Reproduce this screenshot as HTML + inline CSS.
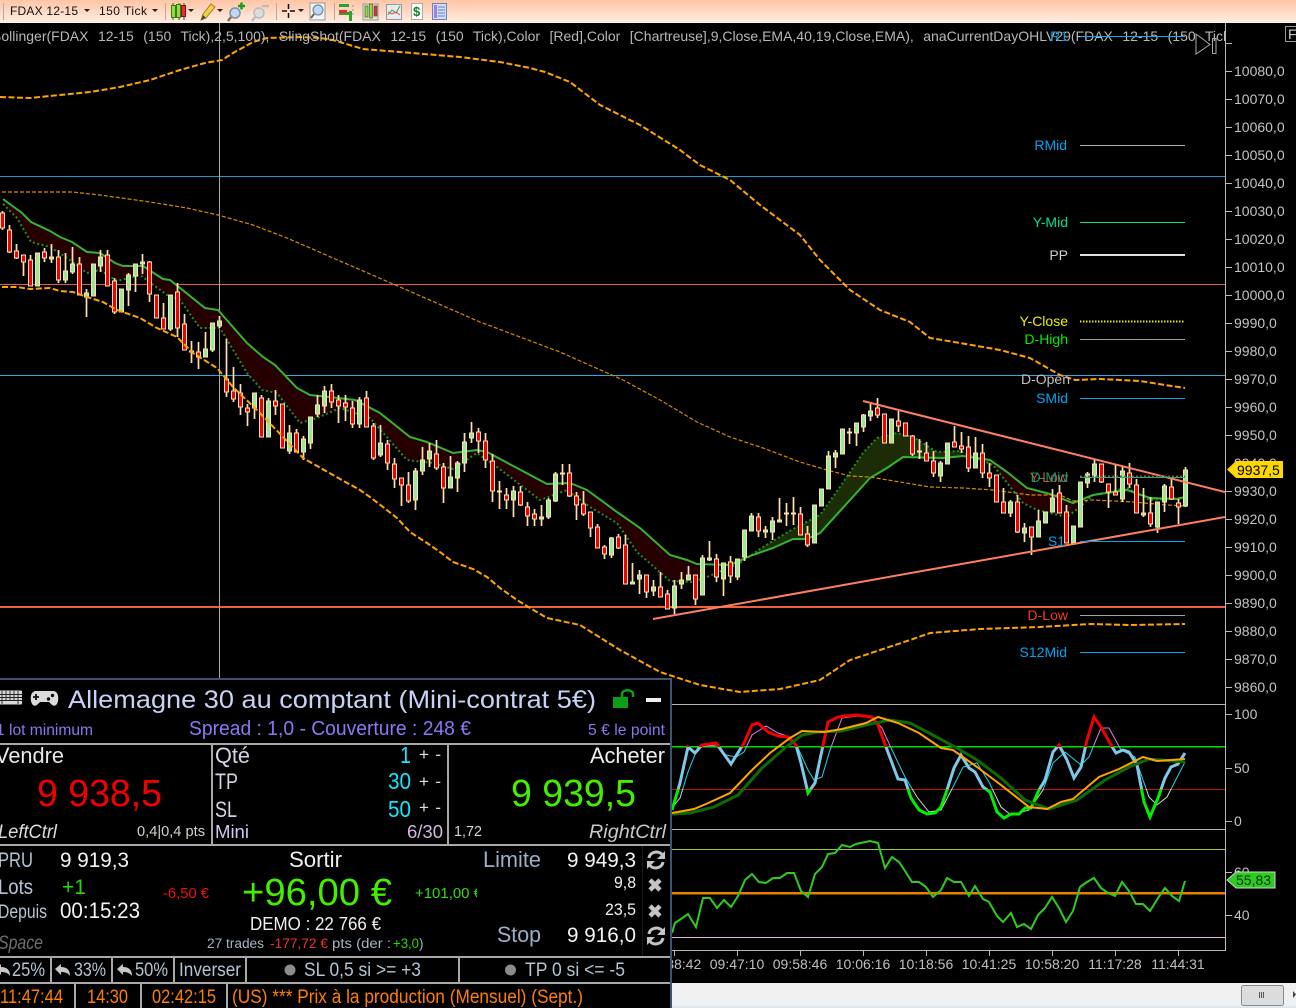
<!DOCTYPE html>
<html><head><meta charset="utf-8"><title>FDAX</title>
<style>
html,body{margin:0;padding:0;background:#000;width:1296px;height:1008px;overflow:hidden}
svg{position:absolute;left:0;top:0;display:block}
text{font-family:"Liberation Sans",Arial,sans-serif;white-space:pre}
.a{font-size:14px;fill:#c4c4c4}
.l{font-size:14px;text-anchor:end}
.t{font-size:14px;fill:#c0c0c0;text-anchor:middle}
</style></head><body>
<svg width="1296" height="1008" viewBox="0 0 1296 1008">
<defs>
<linearGradient id="tb" x1="0" y1="0" x2="0" y2="1"><stop offset="0" stop-color="#ffc5a5"/><stop offset="1" stop-color="#fdeee4"/></linearGradient>
<clipPath id="ch"><rect x="0" y="23" width="1225" height="681"/></clipPath>
<clipPath id="hi"><rect x="672" y="705" width="553" height="42"/></clipPath>
<clipPath id="mid"><rect x="672" y="747" width="553" height="42"/></clipPath>
<clipPath id="lo"><rect x="672" y="789" width="553" height="40"/></clipPath>
</defs>
<rect width="1296" height="1008" fill="#000"/>

<!-- toolbar -->
<rect width="1296" height="23" fill="url(#tb)"/>
<g fill="#b8a8a0"><rect x="3" y="3" width="1" height="17"/><rect x="165" y="3" width="1" height="17"/><rect x="276" y="3" width="1" height="17"/><rect x="334" y="3" width="1" height="17"/></g>
<text x="10" y="15" font-size="12" fill="#111" textLength="68" lengthAdjust="spacing">FDAX 12-15</text>
<path d="M84 9h6l-3 3zM152 9h6l-3 3zM188 9h6l-3 3zM217 9h6l-3 3zM298 9h6l-3 3z" fill="#222"/>
<text x="99" y="15" font-size="12" fill="#111" textLength="48" lengthAdjust="spacing">150 Tick</text>
<path d="M173 3v17M179 3v17M184 3v17" stroke="#444" fill="none"/>
<rect x="171.500" y="5.500" width="4" height="12" fill="#8fe03a" stroke="#3a7a10"/><rect x="176.500" y="4.500" width="4" height="13" fill="#8fe03a" stroke="#3a7a10"/><rect x="181.500" y="5.500" width="4" height="11" fill="#e63030" stroke="#801010"/>
<path d="M201 20l2-6L211 4l4 3-9 11z" fill="#f3d040" stroke="#a08030"/><path d="M201 20l2-5 3 3z" fill="#444"/>
<circle cx="235" cy="13" r="5" fill="#bcd8f4" stroke="#8090a0" stroke-width="1.500"/><path d="M231 17l-3 4" stroke="#907050" stroke-width="2.500"/><path d="M238 6h7M241.500 2.500v7" stroke="#10a020" stroke-width="2.500"/>
<circle cx="259" cy="13" r="5" fill="#ddd" stroke="#bbb" stroke-width="1.500"/><path d="M255 17l-3 4" stroke="#bbb" stroke-width="2.500"/><path d="M262 6h7" stroke="#bbb" stroke-width="2.500"/>
<path d="M282 11h5M290 11h5M288.500 4v5M288.500 13v5" stroke="#111" stroke-width="1.500"/>
<rect x="310" y="3" width="15" height="17" fill="#f4f4f4" stroke="#999"/><circle cx="318" cy="10" r="5" fill="#bcd8f4" stroke="#6a7a8a"/><path d="M314 14l-3 4" stroke="#806040" stroke-width="2"/>
<path d="M339 4h10v3h-10zM339 12h10v3h-10z" fill="#30a030"/><rect x="339" y="10" width="8" height="3" fill="#e03030"/><rect x="349" y="11" width="3" height="10" fill="#30a030"/><path d="M352 6h2M352 10h2M352 14h2" stroke="#999"/>
<rect x="363" y="4" width="15" height="16" fill="#e6e0d0" stroke="#999"/><rect x="365" y="6" width="3" height="11" fill="#8fe03a" stroke="#444" stroke-width=".6"/><rect x="369.500" y="4" width="3" height="14" fill="#8fe03a" stroke="#444" stroke-width=".6"/><rect x="374" y="6" width="3" height="10" fill="#e63030" stroke="#444" stroke-width=".6"/>
<rect x="386.500" y="4.500" width="15" height="15" fill="#e8ecf0" stroke="#999"/><path d="M388 15l4-5 4 3 4-7" stroke="#40a040" fill="none"/><path d="M388 12l4 2 4-2 4 3" stroke="#e05050" fill="none"/>
<rect x="411.500" y="3.500" width="11" height="16" fill="#fff" stroke="#aaa"/><text x="413" y="16" font-size="13" font-weight="bold" fill="#108030">$</text>
<rect x="432.500" y="3.500" width="14" height="16" fill="#cfe0f8" stroke="#7080b0"/><rect x="434" y="5" width="3" height="13" fill="#a080e0"/><path d="M438 7h7M438 10h7M438 13h7M438 16h7" stroke="#6080c0"/>

<!-- chart horizontal lines -->
<g clip-path="url(#ch)">
<rect x="0" y="176" width="1225" height="1" fill="#1c9ad6"/>
<rect x="0" y="284" width="1225" height="1" fill="#e05a5a"/>
<rect x="0" y="375" width="1225" height="1" fill="#30a8e0"/>
<rect x="0" y="606" width="1225" height="2" fill="#f0603c"/>
<rect x="219" y="23" width="1" height="660" fill="#a8a8a8"/>

<!-- clouds -->
<polygon fill="#260000" points="3,199 22,213 31,222 50,231 60,237 72,242 87,252 100,253 115,263 123,266 143,266 163,279 170,280 205,308 218,310 247,343 263,357 275,365 297,388 310,395 330,397 355,400 380,413 410,437 427,442 453,453 477,450 487,452 517,468 547,484 570,483 587,490 617,512 640,528 670,555 687,560 697,564 707,577 693,582 670,581 637,552 617,523 590,507 567,490 540,500 497,467 477,453 453,469 433,463 407,460 370,418 340,408 317,418 300,423 277,393 262,390 247,373 220,328 200,328 180,300 167,295 140,275 117,281 100,270 87,273 70,260 50,247 31,242 17,218 3,204"/>
<polygon fill="#1b2c06" points="735,562 750,556 773,548 793,539 807,539 820,533 870,478 887,468 903,457 943,458 963,456 960,451 937,452 913,437 897,433 877,438 863,453 840,487 820,515 793,529 763,547 740,563"/>
<polygon fill="#260000" points="975,458 990,460 1007,472 1027,488 1050,494 1073,503 1080,507 1067,517 1037,510 1023,503 993,465"/>
<polygon fill="#1b2c06" points="1080,503 1093,495 1127,490 1150,498 1177,499 1150,500 1127,488 1093,495"/>

<!-- MA dotted/solid -->
<polyline fill="none" stroke="#1f8f1f" stroke-width="2" stroke-dasharray="2 2.500" points="3,204 17,218 31,242 50,247 70,260 87,273 100,270 117,281 140,275 167,295 180,300 200,328 220,328 247,373 262,390 277,393 300,423 317,418 340,408 370,418 407,460 433,463 453,469 477,453 497,467 540,500 567,490 590,507 617,523 637,552 670,581 693,582 707,577 740,563 763,547 793,529 820,515 840,487 863,453 877,438 897,433 913,437 937,452 960,451 993,465 1023,503 1037,510 1067,517 1080,507 1093,495 1127,488 1150,500 1180,498"/>
<polyline fill="none" stroke="#35b52d" stroke-width="2" points="3,199 22,213 31,222 50,231 60,237 72,242 87,252 100,253 115,263 123,266 143,266 163,279 170,280 205,308 218,310 247,343 263,357 275,365 297,388 310,395 330,397 355,400 380,413 410,437 427,442 453,453 477,450 487,452 517,468 547,484 570,483 587,490 617,512 640,528 670,555 687,560 697,564 730,565 750,556 773,548 793,539 807,539 820,533 870,478 887,468 903,457 943,458 963,456 990,460 1007,472 1027,488 1050,494 1073,503 1093,495 1127,490 1150,498 1177,499 1185,497"/>

<!-- mid MA -->
<polyline fill="none" stroke="#d98a00" stroke-width="1.200" stroke-dasharray="4 2" points="2,192 72,192 100,195 150,202 187,208 218,215 253,225 287,238 340,261 400,287 480,322 560,352 623,380 660,400 697,422 730,437 763,448 800,462 827,470 850,476 870,477 930,487 963,488 993,490 1030,495 1060,495 1073,501 1093,500 1133,502 1167,505 1185,506"/>

<!-- candles -->
<path fill="none" stroke="#ffdeb0" stroke-width="1.700" d="M2.500 211V230M9.500 225V253M16.500 244V259M23.500 255V276M30.500 255V286M37.500 253V286M44.500 248V262M51.500 244V263M58.500 250V283M65.500 253V283M72.500 247V274M79.500 257V295M86.500 289V317M93.500 264V296M100.500 250V272M107.500 250V286M114.500 278V314M121.500 289V312M128.500 273V306M135.500 264V292M142.500 254V274M149.500 261V302M156.500 295V318M163.500 303V329M170.500 295V331M177.500 283V337M184.500 314V350M191.500 341V363M198.500 342V369M205.500 332V357M212.500 323V352M219.500 316V328M226.500 339V397M233.500 367V402M240.500 384V415M247.500 404V426M254.500 393V419M261.500 395V437M268.500 398V437M275.500 390V415M282.500 404V448M289.500 425V454M296.500 429V452M303.500 436V460M310.500 417V449M317.500 395V417M324.500 386V413M331.500 384V408M338.500 395V423M345.500 395V421M352.500 401V428M359.500 397V428M366.500 391V427M373.500 423V460M380.500 425V457M387.500 440V470M394.500 458V488M401.500 478V506M408.500 472V503M415.500 468V510M422.500 447V475M429.500 443V467M436.500 440V470M443.500 463V503M450.500 456V488M457.500 461V492M464.500 433V472M471.500 422V443M478.500 428V453M485.500 433V468M492.500 454V502M499.500 481V509M506.500 488V509M513.500 486V517M520.500 486V506M527.500 502V526M534.500 509V526M541.500 505V526M548.500 498V519M555.500 472V502M562.500 464V485M569.500 464V497M576.500 492V520M583.500 491V516M590.500 512V537M597.500 524V548M604.500 545V559M611.500 537V558M618.500 534V549M625.500 535V584M632.500 563V584M639.500 570V594M646.500 575V598M653.500 580V596M660.500 572V597M667.500 590V609M674.500 580V614M681.500 572V589M688.500 566V580M695.500 575V605M702.500 555V595M709.500 541V561M716.500 554V582M723.500 563V596M730.500 556V583M737.500 559V580M744.500 530V561M751.500 513V531M758.500 513V537M765.500 526V538M772.500 517V540M779.500 498V522M786.500 503V526M793.500 497V525M800.500 507V535M807.500 526V547M814.500 505V543M821.500 489V506M828.500 451V489M835.500 450V468M842.500 429V454M849.500 428V444M856.500 423V446M863.500 414V432M870.500 404V421M877.500 398V418M884.500 414V443M891.500 419V443M898.500 411V432M905.500 423V436M912.500 435V456M919.500 439V459M926.500 442V461M933.500 451V477M940.500 461V482M947.500 443V464M954.500 426V447M961.500 432V453M968.500 436V472M975.500 437V468M982.500 444V478M989.500 463V487M996.500 475V502M1003.500 488V513M1010.500 500V517M1017.500 495V533M1024.500 523V542M1031.500 527V555M1038.500 510V537M1045.500 512V523M1052.500 489V512M1059.500 485V513M1066.500 505V543M1073.500 526V543M1080.500 482V527M1087.500 472V488M1094.500 459V482M1101.500 464V483M1108.500 484V508M1115.500 465V495M1122.500 467V502M1129.500 463V488M1136.500 479V513M1143.500 488V517M1150.500 497V527M1157.500 502V533M1164.500 484V512M1171.500 478V500M1178.500 499V524M1185.500 467V507"/>
<path fill="#f00000" stroke="#ffdeb0" d="M.5 213h4V228h-4zM7.500 230h4V252h-4zM14.500 251h4V258h-4zM21.500 255h4V262h-4zM28.500 260h4V286h-4zM42.500 252h4V258h-4zM56.500 257h4V280h-4zM77.500 264h4V295h-4zM105.500 255h4V286h-4zM112.500 281h4V312h-4zM147.500 262h4V294h-4zM154.500 295h4V318h-4zM161.500 318h4V329h-4zM175.500 292h4V328h-4zM182.500 324h4V350h-4zM196.500 352h4V357h-4zM224.500 379h4V392h-4zM231.500 391h4V399h-4zM238.500 393h4V407h-4zM245.500 408h4V412h-4zM259.500 398h4V437h-4zM273.500 401h4V406h-4zM280.500 404h4V448h-4zM294.500 433h4V452h-4zM329.500 391h4V402h-4zM336.500 400h4V406h-4zM343.500 403h4V407h-4zM350.500 408h4V424h-4zM364.500 398h4V427h-4zM371.500 426h4V458h-4zM385.500 444h4V463h-4zM392.500 464h4V479h-4zM399.500 478h4V485h-4zM406.500 485h4V501h-4zM434.500 454h4V468h-4zM441.500 467h4V488h-4zM476.500 432h4V441h-4zM483.500 441h4V460h-4zM490.500 461h4V491h-4zM504.500 495h4V500h-4zM518.500 492h4V505h-4zM525.500 507h4V516h-4zM532.500 514h4V519h-4zM560.500 473h4V474h-4zM567.500 473h4V496h-4zM574.500 496h4V505h-4zM581.500 504h4V514h-4zM588.500 512h4V528h-4zM595.500 527h4V548h-4zM602.500 547h4V554h-4zM616.500 537h4V548h-4zM623.500 545h4V584h-4zM644.500 575h4V592h-4zM658.500 587h4V597h-4zM665.500 594h4V609h-4zM693.500 575h4V599h-4zM714.500 559h4V577h-4zM728.500 562h4V576h-4zM756.500 517h4V531h-4zM798.500 514h4V535h-4zM805.500 534h4V545h-4zM875.500 408h4V415h-4zM882.500 414h4V443h-4zM896.500 421h4V426h-4zM903.500 423h4V436h-4zM910.500 436h4V454h-4zM924.500 453h4V461h-4zM931.500 461h4V473h-4zM952.500 442h4V447h-4zM959.500 446h4V449h-4zM966.500 447h4V468h-4zM980.500 453h4V473h-4zM987.500 473h4V478h-4zM994.500 475h4V502h-4zM1001.500 502h4V513h-4zM1015.500 502h4V532h-4zM1029.500 527h4V537h-4zM1057.500 493h4V513h-4zM1064.500 512h4V543h-4zM1099.500 464h4V482h-4zM1106.500 484h4V492h-4zM1113.500 492h4V495h-4zM1127.500 473h4V484h-4zM1134.500 485h4V513h-4zM1148.500 513h4V524h-4zM1169.500 487h4V499h-4zM1176.500 503h4V507h-4z"/>
<path fill="#98e898" stroke="#ffdeb0" d="M35.500 253h4V286h-4zM49.500 257h4V259h-4zM63.500 271h4V280h-4zM70.500 264h4V272h-4zM84.500 293h4V297h-4zM91.500 264h4V296h-4zM98.500 257h4V266h-4zM119.500 289h4V312h-4zM126.500 275h4V290h-4zM133.500 264h4V276h-4zM140.500 262h4V264h-4zM168.500 295h4V329h-4zM189.500 351h4V352h-4zM203.500 349h4V357h-4zM210.500 323h4V350h-4zM217.500 321h4V326h-4zM252.500 393h4V408h-4zM266.500 401h4V437h-4zM287.500 433h4V451h-4zM301.500 439h4V452h-4zM308.500 417h4V443h-4zM315.500 405h4V414h-4zM322.500 391h4V406h-4zM357.500 400h4V424h-4zM378.500 443h4V455h-4zM413.500 471h4V500h-4zM420.500 460h4V471h-4zM427.500 451h4V459h-4zM448.500 477h4V488h-4zM455.500 463h4V478h-4zM462.500 442h4V463h-4zM469.500 433h4V438h-4zM497.500 491h4V492h-4zM511.500 491h4V500h-4zM539.500 517h4V519h-4zM546.500 500h4V517h-4zM553.500 474h4V501h-4zM609.500 538h4V555h-4zM630.500 582h4V584h-4zM637.500 575h4V579h-4zM651.500 587h4V591h-4zM672.500 586h4V608h-4zM679.500 580h4V584h-4zM686.500 575h4V580h-4zM700.500 558h4V595h-4zM707.500 558h4V560h-4zM721.500 563h4V579h-4zM735.500 559h4V577h-4zM742.500 530h4V557h-4zM749.500 516h4V531h-4zM763.500 530h4V532h-4zM770.500 521h4V532h-4zM777.500 520h4V522h-4zM784.500 513h4V514h-4zM791.500 513h4V514h-4zM812.500 505h4V543h-4zM819.500 489h4V506h-4zM826.500 456h4V489h-4zM833.500 453h4V457h-4zM840.500 429h4V454h-4zM847.500 432h4V433h-4zM854.500 423h4V433h-4zM861.500 415h4V427h-4zM868.500 411h4V416h-4zM889.500 419h4V443h-4zM917.500 451h4V452h-4zM938.500 463h4V476h-4zM945.500 443h4V464h-4zM973.500 453h4V468h-4zM1008.500 502h4V513h-4zM1022.500 528h4V533h-4zM1036.500 521h4V537h-4zM1043.500 512h4V523h-4zM1050.500 498h4V512h-4zM1071.500 526h4V543h-4zM1078.500 482h4V527h-4zM1085.500 474h4V483h-4zM1092.500 464h4V476h-4zM1120.500 471h4V499h-4zM1141.500 513h4V515h-4zM1155.500 502h4V527h-4zM1162.500 486h4V502h-4zM1183.500 470h4V506h-4z"/>

<!-- bollinger bands -->
<polyline fill="none" stroke="#ffa500" stroke-width="2" stroke-dasharray="6 2.500" points="0,97 30,98 60,95 90,92 120,87 150,80 180,70 205,63 222,60 233,53 253,42 267,38 300,37 320,38 333,40 363,49 400,52 460,57 500,62 530,68 545,72 570,82 600,105 640,125 680,150 700,165 730,180 760,205 800,235 820,260 850,290 880,310 910,322 930,338 960,343 1000,350 1030,358 1060,375 1075,380 1100,379 1140,381 1165,385 1185,388"/>
<polyline fill="none" stroke="#ffa500" stroke-width="2" stroke-dasharray="6 2.500" points="2,287 17,287 30,289 50,288 60,291 73,292 87,297 103,302 117,310 140,318 157,328 177,337 193,353 217,368 233,387 260,413 283,437 303,458 340,479 360,490 370,497 383,507 397,518 410,532 427,543 440,552 453,562 473,569 487,577 500,588 517,600 530,608 547,618 580,625 620,650 660,672 700,685 740,692 780,689 820,680 850,660 880,650 910,640 930,633 980,629 1040,627 1090,624 1130,625 1185,624"/>

<!-- trend lines -->
<path d="M863 401L1225 492M653 619L1225 517" stroke="#ff8060" stroke-width="2" fill="none"/>
</g>

<!-- legend -->
<g clip-path="url(#ch)">
<text x="-8" y="41" font-size="14" fill="#b8b8b8" word-spacing=".85">Bollinger(FDAX  12-15  (150  Tick),2,5,100),  SlingShot(FDAX  12-15  (150  Tick),Color  [Red],Color  [Chartreuse],9,Close,EMA,40,19,Close,EMA),  anaCurrentDayOHLV29(FDAX  12-15  (150  Tick</text>
<text x="1068" y="41" class="l" fill="#0a9ae0">R1</text>
<rect x="1080" y="36" width="105" height="1" fill="#00b0f0"/>
</g>
<path d="M1196 34l14 10.500-14 9.500zM1212.500 38.500h3.500v15h-3.500z" fill="none" stroke="#aaa"/>
<rect x="1285.500" y="26.500" width="20" height="15" fill="none" stroke="#999"/><text x="1288" y="39" font-size="14" fill="#ccc">F</text>

<!-- level labels -->
<text x="1067" y="150" class="l" fill="#00a5f0">RMid</text><rect x="1080" y="145" width="105" height="1" fill="#b0b0b0"/>
<text x="1068" y="227" class="l" fill="#00e090">Y-Mid</text><rect x="1080" y="222" width="105" height="1" fill="#00e08a"/>
<text x="1068" y="260" class="l" fill="#d0d0d0">PP</text><rect x="1080" y="254" width="105" height="2" fill="#e0e0e0"/>
<text x="1068" y="326" class="l" fill="#f0f000">Y-Close</text><path d="M1080 321.500h105" stroke="#e8e800" stroke-width="2" stroke-dasharray="1.500 1.500"/>
<text x="1068" y="344" class="l" fill="#00ee00">D-High</text><rect x="1080" y="339" width="105" height="1" fill="#a0a0a0"/>
<text x="1070" y="384" class="l" fill="#c0c0c0">D-Open</text>
<text x="1068" y="403" class="l" fill="#00a5f0">SMid</text><rect x="1080" y="398" width="105" height="1" fill="#00a8ec"/>
<text x="1068" y="482" class="l" fill="#e04020">Y-Low</text>
<text x="1068" y="482" class="l" fill="#00c0a0" fill-opacity=".8">D-Mid</text>
<path d="M1080 476.500h105" stroke="#c04030" stroke-width="2" stroke-dasharray="2 2"/><rect x="1080" y="477" width="105" height="1" fill="#00c080"/>
<text x="1065" y="546" class="l" fill="#00a5f0">S1</text><rect x="1080" y="541" width="105" height="1" fill="#00a8ec"/>
<text x="1068" y="620" class="l" fill="#f04010">D-Low</text><rect x="1080" y="615" width="105" height="1" fill="#a0a0a0"/>
<text x="1067" y="657" class="l" fill="#00a5f0">S12Mid</text><rect x="1080" y="652" width="105" height="1" fill="#00a8ec"/>

<!-- price axis -->
<rect x="1225" y="23" width="1" height="927" fill="#b8b8b8"/>
<path stroke="#b8b8b8" d="M1225 43.500h7M1225 71.500h7M1225 99.500h7M1225 127.500h7M1225 155.500h7M1225 183.500h7M1225 211.500h7M1225 239.500h7M1225 267.500h7M1225 295.500h7M1225 323.500h7M1225 351.500h7M1225 379.500h7M1225 407.500h7M1225 435.500h7M1225 491.500h7M1225 519.500h7M1225 547.500h7M1225 575.500h7M1225 603.500h7M1225 631.500h7M1225 659.500h7M1225 687.500h7M1225 714.500h7M1225 768.500h7M1225 821.500h7M1225 872.500h7M1225 915.500h7"/>
<g class="a">
<text class="a" x="1234" y="76">10080,0</text><text class="a" x="1234" y="104">10070,0</text><text class="a" x="1234" y="132">10060,0</text><text class="a" x="1234" y="160">10050,0</text><text class="a" x="1234" y="188">10040,0</text><text class="a" x="1234" y="216">10030,0</text><text class="a" x="1234" y="244">10020,0</text><text class="a" x="1234" y="272">10010,0</text><text class="a" x="1234" y="300">10000,0</text>
<text class="a" x="1234" y="328">9990,0</text><text class="a" x="1234" y="356">9980,0</text><text class="a" x="1234" y="384">9970,0</text><text class="a" x="1234" y="412">9960,0</text><text class="a" x="1234" y="440">9950,0</text><text class="a" x="1234" y="468">9940,0</text><text class="a" x="1234" y="496">9930,0</text><text class="a" x="1234" y="524">9920,0</text><text class="a" x="1234" y="552">9910,0</text><text class="a" x="1234" y="580">9900,0</text><text class="a" x="1234" y="608">9890,0</text><text class="a" x="1234" y="636">9880,0</text><text class="a" x="1234" y="664">9870,0</text><text class="a" x="1234" y="692">9860,0</text>
<text class="a" x="1234" y="719">100</text><text class="a" x="1234" y="773">50</text><text class="a" x="1234" y="826">0</text><text class="a" x="1234" y="877">60</text><text class="a" x="1234" y="920">40</text>
</g>
<path d="M1227 469.500l9-8.500h47v17h-47z" fill="#ffd700"/>
<text x="1237" y="475" font-size="14" fill="#000">9937,5</text>

<!-- stochastic panel -->
<rect x="672" y="704" width="553" height="1" fill="#b8b8b8"/>
<rect x="672" y="829" width="553" height="1" fill="#b8b8b8"/>
<rect x="672" y="746" width="553" height="1.500" fill="#00e000"/>
<rect x="672" y="789" width="553" height="1" fill="#c01010"/>
<g fill="none" stroke-width="1">
<polyline clip-path="url(#hi)" stroke="#e080e0" points="672,808 680,798 688,772 698,747 716,745 726,755 736,757 744,752 752,735 766,726 778,733 790,737 798,748 808,770 814,780 822,777 830,750 842,718 858,716 872,717 882,728 892,750 905,777 917,797 929,812 941,810 953,787 963,767 977,763 989,782 1001,807 1011,815 1029,810 1043,790 1053,763 1065,752 1081,765 1089,757 1101,728 1109,728 1121,750 1135,757 1149,797 1157,805 1167,797 1185,762"/>
<polyline clip-path="url(#mid)" stroke="#20d8e8" points="672,808 680,798 688,772 698,747 716,745 726,755 736,757 744,752 752,735 766,726 778,733 790,737 798,748 808,770 814,780 822,777 830,750 842,718 858,716 872,717 882,728 892,750 905,777 917,797 929,812 941,810 953,787 963,767 977,763 989,782 1001,807 1011,815 1029,810 1043,790 1053,763 1065,752 1081,765 1089,757 1101,728 1109,728 1121,750 1135,757 1149,797 1157,805 1167,797 1185,762"/>
<polyline clip-path="url(#lo)" stroke="#c0e8c0" points="672,808 680,798 688,772 698,747 716,745 726,755 736,757 744,752 752,735 766,726 778,733 790,737 798,748 808,770 814,780 822,777 830,750 842,718 858,716 872,717 882,728 892,750 905,777 917,797 929,812 941,810 953,787 963,767 977,763 989,782 1001,807 1011,815 1029,810 1043,790 1053,763 1065,752 1081,765 1089,757 1101,728 1109,728 1121,750 1135,757 1149,797 1157,805 1167,797 1185,762"/>
</g>
<g fill="none" stroke-width="3">
<polyline clip-path="url(#hi)" stroke="#f00000" points="672,810 680,783 688,747 695,753 702,745 716,743 731,764 744,743 752,725 758,723 768,732 778,736 788,737 796,745 801,763 808,793 815,783 822,750 828,722 838,717 856,715 872,717 878,725 886,747 898,779 905,780 911,798 919,810 927,814 935,813 941,807 947,790 954,768 961,755 969,768 975,772 983,787 990,792 997,812 1004,818 1011,814 1019,814 1025,808 1031,808 1039,790 1045,780 1053,752 1059,745 1067,760 1074,778 1081,767 1087,740 1094,717 1101,727 1111,745 1116,753 1123,750 1129,752 1137,765 1144,802 1150,817 1158,798 1165,778 1171,767 1178,764 1185,753"/>
<polyline clip-path="url(#mid)" stroke="#80c8e8" points="672,810 680,783 688,747 695,753 702,745 716,743 731,764 744,743 752,725 758,723 768,732 778,736 788,737 796,745 801,763 808,793 815,783 822,750 828,722 838,717 856,715 872,717 878,725 886,747 898,779 905,780 911,798 919,810 927,814 935,813 941,807 947,790 954,768 961,755 969,768 975,772 983,787 990,792 997,812 1004,818 1011,814 1019,814 1025,808 1031,808 1039,790 1045,780 1053,752 1059,745 1067,760 1074,778 1081,767 1087,740 1094,717 1101,727 1111,745 1116,753 1123,750 1129,752 1137,765 1144,802 1150,817 1158,798 1165,778 1171,767 1178,764 1185,753"/>
<polyline clip-path="url(#lo)" stroke="#00f000" points="672,810 680,783 688,747 695,753 702,745 716,743 731,764 744,743 752,725 758,723 768,732 778,736 788,737 796,745 801,763 808,793 815,783 822,750 828,722 838,717 856,715 872,717 878,725 886,747 898,779 905,780 911,798 919,810 927,814 935,813 941,807 947,790 954,768 961,755 969,768 975,772 983,787 990,792 997,812 1004,818 1011,814 1019,814 1025,808 1031,808 1039,790 1045,780 1053,752 1059,745 1067,760 1074,778 1081,767 1087,740 1094,717 1101,727 1111,745 1116,753 1123,750 1129,752 1137,765 1144,802 1150,817 1158,798 1165,778 1171,767 1178,764 1185,753"/>
</g>
<polyline fill="none" stroke="#0f6a06" stroke-width="3" points="672,814 690,813 714,807 738,795 762,768 786,747 802,735 818,732 842,731 866,725 890,720 910,723 929,733 957,748 977,760 1001,778 1025,800 1049,809 1077,800 1105,780 1129,767 1149,759 1185,762"/>
<polyline fill="none" stroke="#ffa500" stroke-width="2" points="672,813 694,809 706,804 730,793 752,770 770,753 790,738 802,731 824,732 842,729 866,723 878,717 898,723 919,733 941,748 953,750 977,767 1001,785 1029,807 1047,809 1061,802 1073,799 1099,777 1119,769 1143,757 1157,761 1185,759"/>

<!-- RSI panel -->
<rect x="672" y="849" width="553" height="1" fill="#a0c840"/>
<rect x="672" y="892" width="553" height="2.500" fill="#e88000"/>
<rect x="672" y="937" width="553" height="1" fill="#e8b0d8"/>
<rect x="672" y="950" width="554" height="1" fill="#b8b8b8"/>
<polyline fill="none" stroke="#2ecc20" stroke-width="2" points="672,933 675,923 688,914 696,927 703,898 710,898 717,908 724,900 731,907 738,896 745,880 752,874 759,882 766,883 773,878 780,878 787,873 794,873 801,891 808,897 815,874 822,867 828,854 835,853 842,845 850,847 856,844 870,841 878,843 885,868 892,857 899,862 905,871 912,882 919,882 926,887 933,897 941,890 947,878 954,882 961,882 969,896 975,886 983,899 989,902 997,916 1003,922 1011,913 1017,927 1024,924 1031,929 1038,915 1045,908 1052,897 1059,908 1066,922 1073,911 1080,887 1087,882 1094,878 1101,888 1108,893 1115,896 1122,882 1129,891 1136,904 1143,904 1150,911 1158,898 1165,888 1172,896 1179,901 1185,881"/>
<path d="M1227 880l9-8h39v16h-39z" fill="#2ecc20" stroke="#d0d0d0"/>
<text x="1236" y="885" font-size="14" fill="#083008">55,83</text>

<path stroke="#b8b8b8" d="M674.500 950v6M737.500 950v6M800.500 950v6M863.500 950v6M926.500 950v6M989.500 950v6M1052.500 950v6M1115.500 950v6M1178.500 950v6"/>
<text class="t" x="674" y="969">09:38:42</text><text class="t" x="737" y="969">09:47:10</text><text class="t" x="800" y="969">09:58:46</text><text class="t" x="863" y="969">10:06:16</text><text class="t" x="926" y="969">10:18:56</text><text class="t" x="989" y="969">10:41:25</text><text class="t" x="1052" y="969">10:58:20</text><text class="t" x="1115" y="969">11:17:28</text><text class="t" x="1178" y="969">11:44:31</text>

<!-- scrollbar -->
<rect x="672" y="983" width="624" height="25" fill="#f0f0f0"/>
<rect x="672" y="1006" width="624" height="2" fill="#dfe8ee"/>
<rect x="1241.500" y="985.500" width="42" height="20" rx="2" fill="#dcdcdc" stroke="#8a8a8a"/>
<path d="M1259.500 992v6M1261.500 992v6M1263.500 992v6" stroke="#555"/>
<path d="M1293 991v7l3-3.500z" fill="#444"/>

<!-- trading panel -->
<rect x="0" y="679" width="672" height="329" fill="#000"/>
<rect x="0" y="678" width="672" height="2" fill="#3c5470"/>
<rect x="670" y="678" width="2" height="330" fill="#3c5470"/>

<!-- keyboard / gamepad -->
<rect x="-3" y="690.500" width="25" height="14" rx="1" fill="#d8d8d8"/>
<path d="M-3 694.500h25M-3 697.500h25M-3 700.500h25M2 691v13M6 691v10M10 691v10M14 691v10M18 691v13" stroke="#222" stroke-width=".9"/>
<path d="M36 691h17c4 0 6 4 5 10-1 5-4 6-7 3l-2-2H40l-2 2c-3 3-6 2-7-3-1-6 1-10 5-10z" fill="#dcdcdc"/>
<path d="M36 694v6M33 697h6" stroke="#111" stroke-width="1.800"/><circle cx="48.500" cy="699" r="1.700" fill="#111"/><circle cx="52.500" cy="695.500" r="1.700" fill="#111"/>
<text x="68" y="708" font-size="25" fill="#c8d2f4" textLength="528" lengthAdjust="spacingAndGlyphs">Allemagne 30 au comptant (Mini-contrat 5€)</text>
<rect x="613" y="697" width="15" height="11" fill="#0da015"/><path d="M622 697v-3c0-5 11-5 11 0v3" fill="none" stroke="#0da015" stroke-width="2.500"/>
<rect x="646" y="698" width="15" height="4" fill="#f0f0f0"/>

<text x="-4" y="735" font-size="16" fill="#8878f0" textLength="97" lengthAdjust="spacingAndGlyphs">1 lot minimum</text>
<text x="189" y="735" font-size="20" fill="#8c78f4" textLength="282" lengthAdjust="spacingAndGlyphs">Spread : 1,0 - Couverture : 248 €</text>
<text x="588" y="735" font-size="16" fill="#8878f0" textLength="77" lengthAdjust="spacingAndGlyphs">5 € le point</text>

<g fill="#a8a8a8"><rect x="0" y="743" width="670" height="2"/><rect x="0" y="844" width="670" height="2"/><rect x="211" y="744" width="2" height="100"/><rect x="447" y="744" width="2" height="100"/><rect x="0" y="956" width="670" height="2"/><rect x="0" y="982" width="670" height="2"/><rect x="50" y="957" width="2" height="25"/><rect x="111" y="957" width="2" height="25"/><rect x="173" y="957" width="2" height="25"/><rect x="245" y="957" width="2" height="25"/><rect x="458" y="957" width="2" height="25"/><rect x="74" y="984" width="2" height="24"/><rect x="140" y="984" width="2" height="24"/><rect x="226" y="984" width="2" height="24"/></g>
<rect x="642" y="846" width="1" height="110" fill="#1c1c1c"/>

<text x="-5" y="763" font-size="22" fill="#e8e8e8" textLength="69" lengthAdjust="spacingAndGlyphs">Vendre</text>
<text x="37" y="806" font-size="38" fill="#f00000" textLength="125" lengthAdjust="spacingAndGlyphs">9 938,5</text>
<text x="-2" y="838" font-size="19" font-style="italic" fill="#dcdcdc" textLength="59" lengthAdjust="spacingAndGlyphs">LeftCtrl</text>
<text x="137" y="836" font-size="14.500" fill="#cfd6c8" textLength="68" lengthAdjust="spacingAndGlyphs">0,4|0,4 pts</text>
<text x="215" y="763" font-size="22" fill="#d4d4e4" textLength="35" lengthAdjust="spacingAndGlyphs">Qté</text>
<text x="215" y="789" font-size="22" fill="#d4d4e4" textLength="23" lengthAdjust="spacingAndGlyphs">TP</text>
<text x="215" y="817" font-size="22" fill="#d4d4e4" textLength="22" lengthAdjust="spacingAndGlyphs">SL</text>
<text x="215" y="838" font-size="18" fill="#d0c8f0" textLength="34" lengthAdjust="spacingAndGlyphs">Mini</text>
<g font-size="23" fill="#10e8ff"><text x="400" y="763" textLength="11" lengthAdjust="spacingAndGlyphs">1</text><text x="388" y="789" textLength="23" lengthAdjust="spacingAndGlyphs">30</text><text x="388" y="817" textLength="23" lengthAdjust="spacingAndGlyphs">50</text></g>
<g font-size="17" fill="#e0e0e0"><text x="419" y="760" textLength="22">+ -</text><text x="419" y="787" textLength="22">+ -</text><text x="419" y="813" textLength="22">+ -</text></g>
<text x="407" y="838" font-size="18" fill="#d0b8e0" textLength="36" lengthAdjust="spacingAndGlyphs">6/30</text>
<text x="454" y="836" font-size="14.500" fill="#d0d8c8" textLength="28" lengthAdjust="spacingAndGlyphs">1,72</text>
<text x="590" y="763" font-size="22" fill="#f0f0f0" textLength="75" lengthAdjust="spacingAndGlyphs">Acheter</text>
<text x="511" y="806" font-size="38" fill="#44ee00" textLength="125" lengthAdjust="spacingAndGlyphs">9 939,5</text>
<text x="589" y="838" font-size="19" font-style="italic" fill="#c8c8c8" textLength="77" lengthAdjust="spacingAndGlyphs">RightCtrl</text>

<g font-size="21" fill="#b4c4d4"><text x="-2" y="867" textLength="35" lengthAdjust="spacingAndGlyphs">PRU</text><text x="-2" y="894" textLength="35" lengthAdjust="spacingAndGlyphs">Lots</text><text x="-2" y="918" font-size="19" textLength="49" lengthAdjust="spacingAndGlyphs">Depuis</text></g>
<text x="60" y="867" font-size="21" fill="#f4f4f4" textLength="69" lengthAdjust="spacingAndGlyphs">9 919,3</text>
<text x="62" y="894" font-size="21" fill="#22dd00" textLength="24" lengthAdjust="spacingAndGlyphs">+1</text>
<text x="60" y="918" font-size="22" fill="#f4f4f4" textLength="80" lengthAdjust="spacingAndGlyphs">00:15:23</text>
<text x="-2" y="949" font-size="19" font-style="italic" fill="#6e6e6e" textLength="45" lengthAdjust="spacingAndGlyphs">Space</text>
<text x="163" y="898" font-size="14.500" fill="#ee1010" textLength="46" lengthAdjust="spacingAndGlyphs">-6,50 €</text>
<text x="289" y="867" font-size="22" fill="#f0f0f0" textLength="53" lengthAdjust="spacingAndGlyphs">Sortir</text>
<text x="242" y="905" font-size="38" fill="#44ee00" textLength="150" lengthAdjust="spacingAndGlyphs">+96,00 €</text>
<text x="250" y="930" font-size="18.500" fill="#f0f0f0" textLength="131" lengthAdjust="spacingAndGlyphs">DEMO : 22 766 €</text>
<text x="207" y="948" font-size="13.500" fill="#a8b4c4" textLength="57" lengthAdjust="spacingAndGlyphs">27 trades</text>
<text x="270" y="948" font-size="13.500" fill="#f03030" textLength="58" lengthAdjust="spacingAndGlyphs">-177,72 €</text>
<text x="332" y="948" font-size="13.500" fill="#a8b4c4" textLength="59" lengthAdjust="spacingAndGlyphs">pts (der :</text>
<text x="393" y="948" font-size="13.500" fill="#22dd00" textLength="26" lengthAdjust="spacingAndGlyphs">+3,0</text>
<text x="419" y="948" font-size="13.500" fill="#a8b4c4">)</text>
<svg x="415" y="880" width="62" height="24"><text x="0" y="18" font-size="14.500" fill="#30dd10" textLength="67" lengthAdjust="spacingAndGlyphs">+101,00 €</text></svg>
<text x="483" y="867" font-size="22" fill="#9cb0c4" textLength="58" lengthAdjust="spacingAndGlyphs">Limite</text>
<text x="567" y="867" font-size="21" fill="#f4f4f4" textLength="69" lengthAdjust="spacingAndGlyphs">9 949,3</text>
<text x="614" y="888" font-size="17" fill="#f0f0f0" textLength="22" lengthAdjust="spacingAndGlyphs">9,8</text>
<text x="605" y="915" font-size="17" fill="#f0f0f0" textLength="31" lengthAdjust="spacingAndGlyphs">23,5</text>
<text x="497" y="942" font-size="22" fill="#9cb0c4" textLength="44" lengthAdjust="spacingAndGlyphs">Stop</text>
<text x="567" y="942" font-size="21" fill="#f4f4f4" textLength="69" lengthAdjust="spacingAndGlyphs">9 916,0</text>

<!-- refresh & X icons -->
<g fill="none" stroke="#c4c4c4" stroke-width="3">
<path d="M649 858c1-7 11-8 14-2M663 862c-1 7-11 8-14 2"/>
<path d="M649 934c1-7 11-8 14-2M663 938c-1 7-11 8-14 2"/>
</g>
<path d="M665 851v8h-8zM647 869v-8h8zM665 927v8h-8zM647 945v-8h8z" fill="#c4c4c4"/>
<path d="M650 880l10 10M660 880l-10 10M650 906l10 10M660 906l-10 10" stroke="#c4c4c4" stroke-width="4.500"/>

<!-- buttons row -->
<g fill="#c8c8c8">
<path d="M-5 969l6-5v3c6 0 9 3 9 9c-2-3-5-4-9-4v3z"/>
<path d="M55 969l6-5v3c6 0 9 3 9 9c-2-3-5-4-9-4v3z"/>
<path d="M117 969l6-5v3c6 0 9 3 9 9c-2-3-5-4-9-4v3z"/>
</g>
<g font-size="19" fill="#b4c4d4">
<text x="12" y="976" textLength="33" lengthAdjust="spacingAndGlyphs">25%</text>
<text x="74" y="976" textLength="32" lengthAdjust="spacingAndGlyphs">33%</text>
<text x="135" y="976" textLength="33" lengthAdjust="spacingAndGlyphs">50%</text>
<text x="179" y="976" textLength="62" lengthAdjust="spacingAndGlyphs">Inverser</text>
<text x="304" y="976" textLength="117" lengthAdjust="spacingAndGlyphs">SL 0,5 si &gt;= +3</text>
<text x="525" y="976" textLength="100" lengthAdjust="spacingAndGlyphs">TP 0 si &lt;= -5</text>
</g>
<circle cx="290" cy="970" r="5.500" fill="#8c8c8c"/><circle cx="510.500" cy="970" r="5.500" fill="#8c8c8c"/>

<g font-size="19" fill="#ff8000">
<text x="0" y="1003" textLength="63" lengthAdjust="spacingAndGlyphs">11:47:44</text>
<text x="87" y="1003" textLength="41" lengthAdjust="spacingAndGlyphs">14:30</text>
<text x="152" y="1003" textLength="64" lengthAdjust="spacingAndGlyphs">02:42:15</text>
<text x="232" y="1003" textLength="351" lengthAdjust="spacingAndGlyphs">(US) *** Prix à la production (Mensuel) (Sept.)</text>
</g>
</svg>
</body></html>
